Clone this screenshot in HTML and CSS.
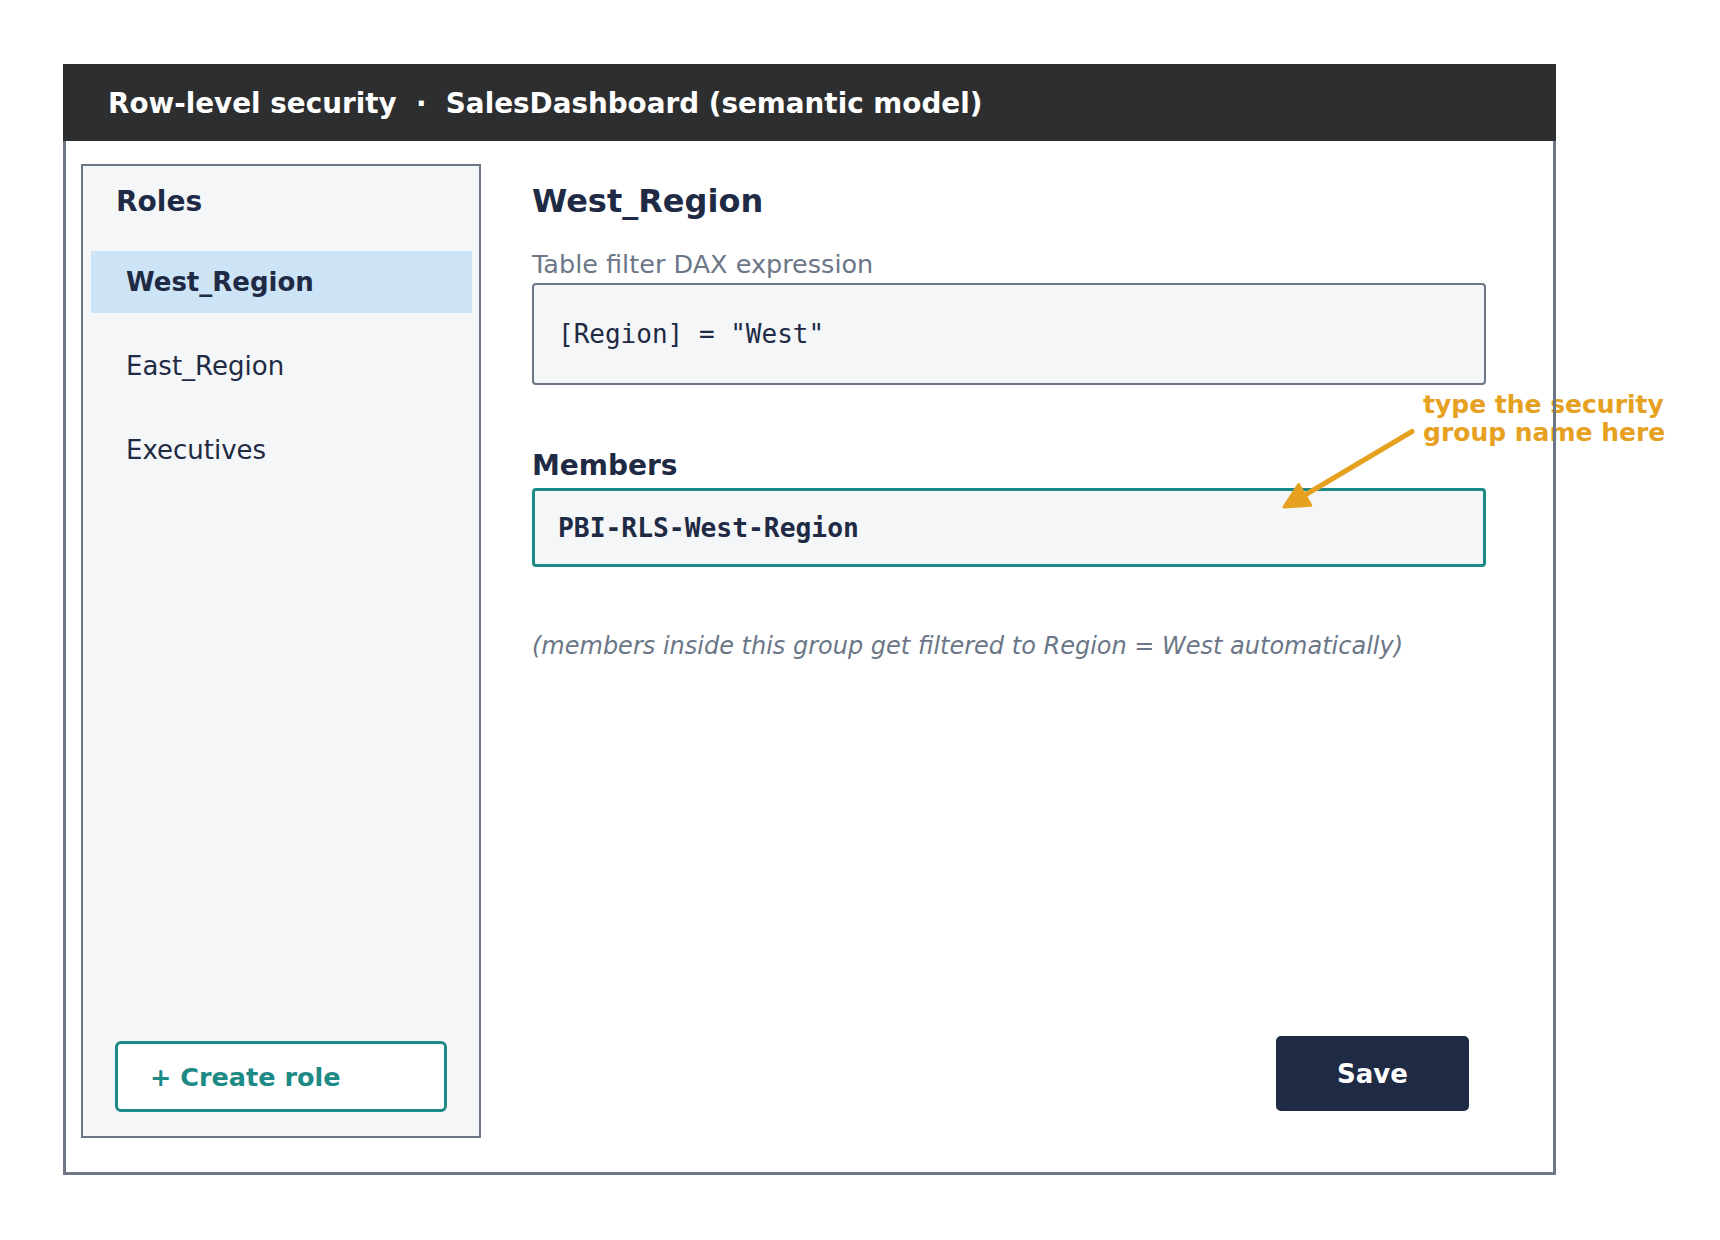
FILE: index.html
```html
<!DOCTYPE html>
<html lang="en">
<head>
<meta charset="utf-8">
<title>Row-level security</title>
<link rel="stylesheet" href="styles.css">
</head>
<body>
<div class="frame">
  <header class="titlebar">Row-level security  ·  SalesDashboard (semantic model)</header>
  <div class="content">
    <aside class="sidebar">
      <h2 class="sidebar-title">Roles</h2>
      <ul class="role-list">
        <li class="role role-active">West_Region</li>
        <li class="role">East_Region</li>
        <li class="role">Executives</li>
      </ul>
      <button class="btn-create">+ Create role</button>
    </aside>
    <main class="editor">
      <h1 class="role-name">West_Region</h1>
      <div class="field-label">Table filter DAX expression</div>
      <div class="dax-box">[Region] = "West"</div>
      <h3 class="section-title">Members</h3>
      <div class="members-box">PBI-RLS-West-Region</div>
      <p class="note">(members inside this group get filtered to Region = West automatically)</p>
      <button class="btn-save">Save</button>
    </main>
  </div>
  <div class="callout">type the security<br>group name here</div>
  <svg class="callout-arrow" width="160" height="100" viewBox="0 0 160 100">
    <line x1="142" y1="11.5" x2="35" y2="75" stroke="#e5a11f" stroke-width="5" stroke-linecap="round"/>
    <polygon points="14,87 28.6,64.5 40.8,85.3" fill="#e5a11f" stroke="#e5a11f" stroke-width="3" stroke-linejoin="round"/>
  </svg>
</div>
</body>
</html>
```

FILE: styles.css
```css
* {
  box-sizing: border-box;
}

body {
  margin: 0;
  background: #ffffff;
  font-family: "DejaVu Sans", "Liberation Sans", sans-serif;
  color: #1f2a44;
}

.frame {
  position: relative;
  margin: 64px 0 0 63px;
  width: 1493px;
  height: 1111px;
  display: flex;
  flex-direction: column;
}

/* outer border sits above the callout text, below the title bar */
.frame::after {
  content: "";
  position: absolute;
  left: 0;
  right: 0;
  top: 77px;
  bottom: 0;
  border: 3px solid #6b7787;
  border-top: none;
  pointer-events: none;
  z-index: 2;
}

.titlebar {
  height: 77px;
  flex: none;
  background: #2d2e30;
  color: #ffffff;
  font-weight: bold;
  font-size: 27.8px;
  white-space: pre;
  display: flex;
  align-items: center;
  padding: 1px 0 0 45px;
}

.content {
  flex: 1;
  display: flex;
  gap: 51px;
  padding: 23px 70px 37px 18px;
  min-height: 0;
}

.sidebar {
  width: 400px;
  flex: none;
  background: #f4f6f8;
  border: 2px solid #6b7787;
  display: flex;
  flex-direction: column;
  padding: 19px 7px 24px 8px;
}

.sidebar-title {
  margin: 0 0 32px 25px;
  font-size: 28px;
  line-height: 34px;
  font-weight: bold;
}

.role-list {
  list-style: none;
  margin: 0;
  padding: 0;
  display: flex;
  flex-direction: column;
  gap: 22px;
}

.role {
  height: 62px;
  display: flex;
  align-items: center;
  padding-left: 35px;
  font-size: 26px;
}

.role-active {
  background: #cde4f7;
  font-weight: bold;
}

.btn-create {
  margin: auto 0 0 24px;
  width: 332px;
  height: 71px;
  border: 3px solid #1e8a86;
  border-radius: 6px;
  background: #ffffff;
  color: #1e8a86;
  font-family: inherit;
  font-size: 25.5px;
  font-weight: bold;
  text-align: left;
  padding: 0 0 0 32px;
}

.editor {
  flex: 1;
  display: flex;
  flex-direction: column;
  min-width: 0;
}

.role-name {
  margin: 17px 0 0;
  font-size: 32px;
  line-height: 40px;
  font-weight: bold;
}

.field-label {
  margin-top: 28px;
  font-size: 25.5px;
  line-height: 30px;
  color: #6b7787;
}

.dax-box {
  margin-top: 4px;
  height: 102px;
  border: 2px solid #6b7787;
  border-radius: 4px;
  background: #f4f6f8;
  display: flex;
  align-items: center;
  padding-left: 24px;
  font-family: "DejaVu Sans Mono", "Liberation Mono", monospace;
  font-size: 26px;
}

.section-title {
  margin: 64px 0 0;
  font-size: 28px;
  line-height: 34px;
  font-weight: bold;
}

.members-box {
  margin-top: 5px;
  height: 79px;
  border: 3px solid #1e8a86;
  border-radius: 4px;
  background: #f4f6f8;
  display: flex;
  align-items: center;
  padding-left: 23px;
  font-family: "DejaVu Sans Mono", "Liberation Mono", monospace;
  font-size: 26.3px;
  font-weight: bold;
}

.note {
  margin: 65px 0 0;
  font-size: 24px;
  line-height: 28px;
  font-style: italic;
  color: #6b7787;
}

.btn-save {
  margin: auto 17px 27px 0;
  align-self: flex-end;
  width: 193px;
  height: 75px;
  border: none;
  border-radius: 5px;
  background: #1f2a44;
  color: #ffffff;
  font-family: inherit;
  font-size: 26px;
  font-weight: bold;
}

.callout {
  position: absolute;
  left: 1360px;
  top: 327px;
  z-index: 1;
  white-space: nowrap;
  color: #e5a11f;
  font-size: 25px;
  line-height: 28px;
  font-weight: bold;
}

.callout-arrow {
  position: absolute;
  left: 1207px;
  top: 356px;
  z-index: 1;
  overflow: visible;
}
```
